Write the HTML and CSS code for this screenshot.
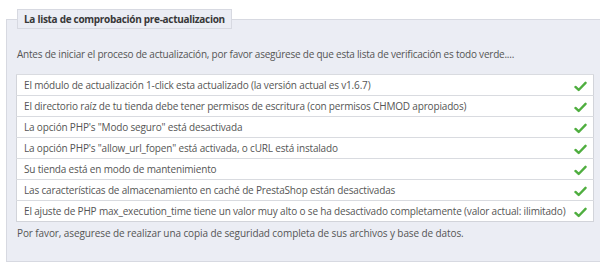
FILE: index.html
```html
<!DOCTYPE html>
<html lang="es">

<head>
    <meta charset="UTF-8">
    <title>Lista de comprobación</title>
    <link rel="stylesheet" href="styles.css">
</head>

<body>
    <fieldset class="checklist">
        <legend>La lista de comprobación pre-actualizacion</legend>
        <p class="intro">Antes de iniciar el proceso de actualización, por favor asegúrese de que esta lista de verificación es todo verde....</p>
        <table class="checks">
            <tr>
                <td>El módulo de actualización 1-click esta actualizado (la versión actual es v1.6.7)</td>
                <td class="ok"><svg class="tick" viewBox="0 0 14 12"><path d="M1.5 6.5 L5 9.8 L12.5 2" /></svg></td>
            </tr>
            <tr>
                <td>El directorio raíz de tu tienda debe tener permisos de escritura (con permisos CHMOD apropiados)</td>
                <td class="ok"><svg class="tick" viewBox="0 0 14 12"><path d="M1.5 6.5 L5 9.8 L12.5 2" /></svg></td>
            </tr>
            <tr>
                <td>La opción PHP's "Modo seguro" está desactivada</td>
                <td class="ok"><svg class="tick" viewBox="0 0 14 12"><path d="M1.5 6.5 L5 9.8 L12.5 2" /></svg></td>
            </tr>
            <tr>
                <td>La opción PHP's "allow_url_fopen" está activada, o cURL está instalado</td>
                <td class="ok"><svg class="tick" viewBox="0 0 14 12"><path d="M1.5 6.5 L5 9.8 L12.5 2" /></svg></td>
            </tr>
            <tr>
                <td>Su tienda está en modo de mantenimiento</td>
                <td class="ok"><svg class="tick" viewBox="0 0 14 12"><path d="M1.5 6.5 L5 9.8 L12.5 2" /></svg></td>
            </tr>
            <tr>
                <td>Las características de almacenamiento en caché de PrestaShop están desactivadas</td>
                <td class="ok"><svg class="tick" viewBox="0 0 14 12"><path d="M1.5 6.5 L5 9.8 L12.5 2" /></svg></td>
            </tr>
            <tr>
                <td>El ajuste de PHP max_execution_time tiene un valor muy alto o se ha desactivado completamente (valor actual: ilimitado)</td>
                <td class="ok"><svg class="tick" viewBox="0 0 14 12"><path d="M1.5 6.5 L5 9.8 L12.5 2" /></svg></td>
            </tr>
        </table>
        <p class="note">Por favor, asegurese de realizar una copia de seguridad completa de sus archivos y base de datos.</p>
    </fieldset>
</body>

</html>
```

FILE: styles.css
```css
* {
    margin: 0;
    padding: 0;
    box-sizing: border-box;
}

html,
body {
    overflow: hidden;
}

body {
    background: #ffffff;
    font-family: "Open Sans", sans-serif;
    font-size: 10px;
    line-height: 14px;
    letter-spacing: -0.17px;
    color: #555555;
    padding: 9px 0 0 6px;
}

.checklist {
    width: 595px;
    height: 253px;
    background-color: #ebedf4;
    border: 1px solid #d7d9e1;
    padding: 0 9px;
}

.checklist legend {
    margin-left: 1px;
    padding: 2px 6px 2px 6px;
    background-color: #ebedf4;
    border: 1px solid #d7d9e1;
    font-weight: bold;
    font-size: 10px;
    letter-spacing: -0.3px;
    color: #383838;
}

.intro {
    padding: 18px 0 0 1px;
    height: 45px;
    letter-spacing: -0.22px;
}

.checks {
    width: 578px;
    table-layout: fixed;
    border-collapse: collapse;
    background-color: #ffffff;
    border: 1px solid #d2d4da;
}

.checks td {
    height: 21px;
    padding: 0 7px;
    border-top: 1px solid #d9dbe0;
    white-space: nowrap;
}

.checks td.ok {
    width: 24px;
    padding: 0 6px 0 0;
    text-align: right;
}

.tick {
    display: inline-block;
    vertical-align: middle;
    width: 13px;
    height: 11px;
}

.tick path {
    fill: none;
    stroke: #4fae3f;
    stroke-width: 2.6;
    stroke-linecap: round;
    stroke-linejoin: round;
}

.note {
    padding: 4px 0 0 1px;
    letter-spacing: -0.1px;
}
```
